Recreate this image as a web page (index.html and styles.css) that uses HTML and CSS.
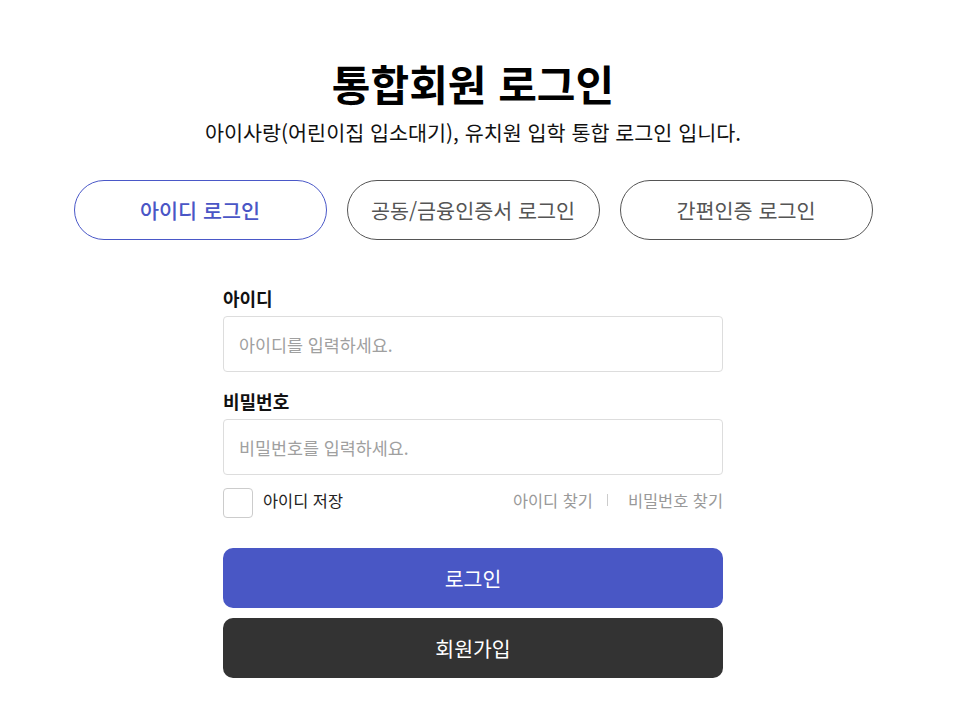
FILE: index.html
```html
<!DOCTYPE html>
<html lang="ko">
<head>
    <meta charset="UTF-8">
    <meta name="viewport" content="width=device-width, initial-scale=1.0">
    <title>통합회원 로그인</title>
    <link rel="stylesheet" href="styles.css">
</head>
<body>
    <div class="page">
        <div class="login-head">
            <h1 class="login-title">통합회원 로그인</h1>
            <p class="login-desc">아이사랑(어린이집 입소대기), 유치원 입학 통합 로그인 입니다.</p>
        </div>

        <div class="login-tabs">
            <button class="tab-btn active">아이디 로그인</button>
            <button class="tab-btn">공동/금융인증서 로그인</button>
            <button class="tab-btn">간편인증 로그인</button>
        </div>

        <form class="login-form" onsubmit="return false;">
            <label class="field-label" for="userId">아이디</label>
            <input class="field-input" type="text" id="userId" placeholder="아이디를 입력하세요.">

            <label class="field-label" for="userPw">비밀번호</label>
            <input class="field-input" type="password" id="userPw" placeholder="비밀번호를 입력하세요.">

            <div class="form-options">
                <label class="save-id">
                    <input type="checkbox" class="save-check">
                    <span>아이디 저장</span>
                </label>
                <div class="find-links">
                    <a href="#">아이디 찾기</a>
                    <span class="divider"></span>
                    <a href="#">비밀번호 찾기</a>
                </div>
            </div>

            <button class="btn btn-login" type="submit">로그인</button>
            <button class="btn btn-join" type="button">회원가입</button>
        </form>
    </div>
</body>
</html>
```

FILE: styles.css
```css
body {
    margin: 0;
    padding: 0;
    background-color: #ffffff;
    font-family: "Noto Sans CJK KR", "Noto Sans", sans-serif;
    color: #111111;
}

.page {
    width: 946px;
    display: flex;
    flex-direction: column;
    align-items: center;
    padding-top: 54px;
}

.login-head {
    text-align: center;
}

.login-title {
    margin: 0;
    font-size: 42px;
    font-weight: 700;
    line-height: 58px;
    color: #000000;
}

.login-desc {
    margin: 6px 0 0;
    font-size: 20.7px;
    line-height: 28px;
    color: #111111;
}

.login-tabs {
    display: flex;
    gap: 20px;
    margin-top: 34px;
}

.tab-btn {
    width: 253px;
    height: 60px;
    border: 1px solid #555555;
    border-radius: 30px;
    background-color: #ffffff;
    font-family: inherit;
    font-size: 20.7px;
    color: #555555;
    cursor: pointer;
}

.tab-btn.active {
    border-color: #4a58c8;
    color: #4a56c6;
    font-weight: 500;
}

.login-form {
    width: 500px;
    display: flex;
    flex-direction: column;
    margin-top: 45px;
}

.field-label {
    font-size: 18px;
    font-weight: 700;
    line-height: 26px;
    margin-bottom: 5px;
}

.field-input {
    height: 56px;
    box-sizing: border-box;
    border: 1px solid #dddddd;
    border-radius: 4px;
    padding: 0 15px;
    font-family: inherit;
    font-size: 17.4px;
    color: #333333;
    margin-bottom: 16px;
}

.field-input::placeholder {
    color: #a0a0a0;
}

.form-options {
    display: flex;
    justify-content: space-between;
    align-items: center;
    margin-top: -3px;
}

.save-id {
    display: flex;
    align-items: center;
    gap: 10px;
    font-size: 16.4px;
    color: #222222;
}

.save-id span,
.find-links a {
    margin-bottom: 6px;
}

.save-check {
    appearance: none;
    width: 30px;
    height: 30px;
    margin: 0;
    border: 1px solid #cccccc;
    border-radius: 4px;
    background-color: #ffffff;
}

.find-links {
    display: flex;
    align-items: center;
    font-size: 16.4px;
}

.find-links a {
    color: #999999;
    text-decoration: none;
}

.divider {
    width: 1px;
    height: 12px;
    margin: 0 20px 6px 14px;
    background-color: #cccccc;
}

.btn {
    height: 60px;
    border: none;
    border-radius: 10px;
    font-family: inherit;
    font-size: 20.5px;
    color: #ffffff;
    cursor: pointer;
}

.btn-login {
    margin-top: 30px;
    background-color: #4957c5;
}

.btn-join {
    margin-top: 10px;
    background-color: #333333;
}
```
